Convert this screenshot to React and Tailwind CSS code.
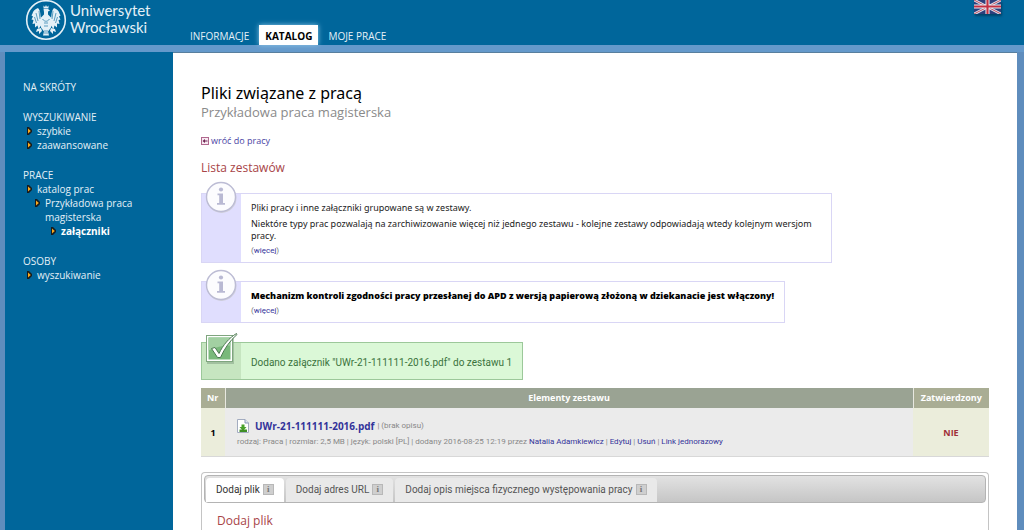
import React from 'react';

const navItems = [
  { label: 'INFORMACJE', active: false },
  { label: 'KATALOG', active: true },
  { label: 'MOJE PRACE', active: false },
];

const menuSections = [
  { title: 'NA SKRÓTY', items: [] },
  {
    title: 'WYSZUKIWANIE',
    items: [
      { label: 'szybkie', indent: 'pl-1' },
      { label: 'zaawansowane', indent: 'pl-1' },
    ],
  },
  {
    title: 'PRACE',
    items: [
      { label: 'katalog prac', indent: 'pl-1' },
      { label: 'Przykładowa praca magisterska', indent: 'pl-3' },
      { label: 'załączniki', indent: 'pl-7', active: true },
    ],
  },
  { title: 'OSOBY', items: [{ label: 'wyszukiwanie', indent: 'pl-1' }] },
];

const tabs = [
  { label: 'Dodaj plik', active: true },
  { label: 'Dodaj adres URL', active: false },
  { label: 'Dodaj opis miejsca fizycznego występowania pracy', active: false },
];

const Emblem = () => (
  <svg viewBox="0 0 42 42" className="w-[42px] h-[42px] shrink-0" fill="none" aria-hidden="true">
    <circle cx="21" cy="21" r="19.3" stroke="#e4f0f7" strokeWidth="1.6" />
    <g fill="#e4f0f7">
      <path d="M18.5 6.5 20 8l1-2 1 2 1.500-1.500v3h-5z" />
      <path d="M18.500 10h4.500l2 1.500-2 1v3l3 3v10l-3 4 1 4h-6l1-4-3-4v-10l3-3v-2.500z" />
      <path d="M16 19c-1-3 0-7-3-10-3 1-5 3-5.500 5.500l-1 2 1.500 1-1.500 3 2 .5-1 4 2.500-.5v4l2.500-2 1 3.500 3-4z" />
      <path d="M26 19c1-3 0-7 3-10 3 1 5 3 5.500 5.500l1 2-1.500 1 1.500 3-2 .5 1 4-2.500-.5v4l-2.500-2-1 3.500-3-4z" />
      <path d="M16 29l-4 1-1 3 3-1 0 3 3-3zM26 29l4 1 1 3-3-1 0 3-3-3z" />
    </g>
    <path d="M14 12l1 8M11 14l2 8M28 12l-1 8M31 14l-2 8M9.500 18l2 6M32.500 18l-2 6" stroke="#00669b" strokeWidth=".6" />
    <path d="M17.500 20c2 3 5 3 7 0M19 24h4M19 27h4M20 31v4M22 31v4" stroke="#00669b" strokeWidth=".6" />
  </svg>
);

const Flag = () => (
  <svg viewBox="0 0 28 14" className="block w-[27px] h-[14px] shadow-[1px_2px_2px_#00446b]" preserveAspectRatio="none" aria-hidden="true">
    <rect width="28" height="14" fill="#2c3f7c" />
    <path d="M0 0l28 14M28 0L0 14" stroke="#dfe3ee" strokeWidth="2.800" />
    <path d="M0 0l28 14M28 0L0 14" stroke="#c04a5c" strokeWidth="1" />
    <path d="M14 0v14M0 6.500h28" stroke="#eceef4" strokeWidth="4.200" />
    <path d="M14 0v14M0 6.500h28" stroke="#c22f42" strokeWidth="2.200" />
  </svg>
);

const Arrow = () => (
  <svg viewBox="0 0 5 8" className="w-[5px] h-2 mt-[3px] shrink-0" aria-hidden="true">
    <path d="M0 0h2l3 3v2L2 8H0z" fill="#161c20" />
    <path d="M1 1.500 3.800 4 1 6.500z" fill="#fba81c" />
  </svg>
);

const BackIcon = () => (
  <svg viewBox="0 0 8 8" className="w-2 h-2" aria-hidden="true">
    <rect x=".5" y=".5" width="7" height="7" fill="#f8eaf2" stroke="#b0688e" />
    <path d="M1.500 4 4 2v1.500h2.500v1H4V6z" fill="#6b2350" />
  </svg>
);

const InfoBadge = () => (
  <svg viewBox="0 0 34 34" className="absolute left-[2px] -top-[14px] w-[34px] h-[34px]" aria-hidden="true">
    <circle cx="17.500" cy="18" r="15" fill="#d0d0dc" />
    <circle cx="17" cy="17" r="14.500" fill="#fcfcfe" stroke="#bcbcd4" strokeWidth="1.400" />
    <circle cx="17" cy="9.500" r="2.100" fill="#b9b9d3" />
    <path d="M13.500 13.500h5.500v9.500h2v1.800h-8V23h2.200v-7.800h-1.700z" fill="#b9b9d3" />
  </svg>
);

const CheckBadge = () => (
  <svg viewBox="0 0 34 34" className="absolute left-[3px] -top-[11px] w-[34px] h-[34px]" aria-hidden="true">
    <rect x="2" y="5" width="27" height="27" fill="#8aa88a" opacity=".6" />
    <rect x="1.500" y="3.500" width="26" height="26" fill="#fff" stroke="#7fa57f" />
    <rect x="3.500" y="5.500" width="22" height="22" fill="#79b97b" />
    <path d="M3.500 5.500h22v8q-12 0-22 5z" fill="#a2d0a2" />
    <path d="M6.500 16.500l3.500-1 4 6C18 13 24 6 31.500 1.500l.5 1C25 8.500 19.500 16.500 15.500 25.500h-3z" fill="#fff" stroke="#4d7a52" strokeWidth="1" />
  </svg>
);

const FileIcon = () => (
  <svg viewBox="0 0 12 14" className="w-3 h-[14px] shrink-0" aria-hidden="true">
    <path d="M.5.5h7.500l3.500 3.500v9.500H.5z" fill="#fff" stroke="#a3acc0" />
    <path d="M8 .5V4h3.500" fill="#dfe5f0" stroke="#8795b5" />
    <path d="M4.500 5.500h3v2.500h2L6 12 2.500 8h2z" fill="#4aa12c" />
    <path d="M2.500 10.500h7.500v2.500H2.500z" fill="#3f8f26" />
  </svg>
);

const InfoMark = () => (
  <span className="inline-flex items-center justify-center w-[11px] h-[11px] bg-[#cfcfcf] border border-[#b8b8b8] font-['Liberation_Serif',serif] font-bold text-[9px] leading-[9px] text-[#777]">
    i
  </span>
);

const MoreLink = () => (
  <p className="mt-px font-[Roboto,sans-serif] text-[8px] leading-4 text-[#777]">
    (<a href="#" className="text-[#33339a]">więcej</a>)
  </p>
);

const InfoBox = ({ children, className }) => (
  <div className={`relative flex w-fit max-w-full bg-white border border-[#d9d6f5] ${className}`}>
    <div className="w-[39px] shrink-0 bg-[#e0defe]" />
    <InfoBadge />
    <div className="px-[10px] pt-2 pb-[3px] font-['Noto_Sans',sans-serif] text-[9px] leading-3 text-[#222]">{children}</div>
  </div>
);

const Header = () => (
  <header className="h-[52px] bg-[#00669b] border-b-[7px] border-[#6499cb] flex items-end">
    <a href="#" className="self-start flex items-start ml-[25px] -mt-px w-[158px] text-[#e4f0f7]">
      <Emblem />
      <span className="ml-[3px] mt-[3px] font-[Lato,sans-serif] text-[15px] leading-[17px]">
        Uniwersytet<br />Wrocławski
      </span>
    </a>
    <nav className="flex items-end">
      {navItems.map((item) => (
        <a
          key={item.label}
          href="#"
          className={
            item.active
              ? 'h-5 px-[6px] mx-[3px] bg-white text-black font-bold text-[10px] leading-[22px] shadow-[0_0_5px_#8cc8e8]'
              : 'h-5 px-[7px] text-[#e4f0f7] text-[10px] leading-[22px]'
          }
        >
          {item.label}
        </a>
      ))}
    </nav>
    <a href="#" aria-label="English" className="ml-auto mr-[23px] self-start">
      <Flag />
    </a>
  </header>
);

const Sidebar = () => (
  <aside className="w-[168px] shrink-0 bg-[#00669b] pl-[18px] pr-7 pt-7 text-[10px] leading-[14px] text-[#e4f0f7]">
    {menuSections.map((section) => (
      <div key={section.title} className="mb-4">
        <h2>{section.title}</h2>
        <ul>
          {section.items.map((item) => (
            <li key={item.label} className={item.indent}>
              <a href="#" className={item.active ? 'flex gap-[5px] font-bold text-white' : 'flex gap-[5px]'}>
                <Arrow />
                <span>{item.label}</span>
              </a>
            </li>
          ))}
        </ul>
      </div>
    ))}
  </aside>
);

const FilesTable = () => (
  <table className="w-full mt-2 border-collapse text-[9px]">
    <thead>
      <tr className="h-5 text-white">
        <th className="w-6 bg-[#a9ad94] border-r border-[#e8e8e0]">Nr</th>
        <th className="bg-[#9aa393] border-r border-[#e8e8e0]">Elementy zestawu</th>
        <th className="w-[76px] bg-[#a9ad94]">Zatwierdzony</th>
      </tr>
    </thead>
    <tbody>
      <tr className="h-12 border-b border-[#d8d8d8]">
        <td className="bg-[#ebeddb] pt-[2px] text-center font-bold text-black">1</td>
        <td className="bg-[#ebebeb] pl-3 pt-[3px] font-[Roboto,sans-serif] text-[8px] text-[#888]">
          <div className="flex items-center leading-[14px]">
            <FileIcon />
            <a href="#" className="ml-[6px] mr-[3px] font-['Open_Sans',sans-serif] text-[10px] font-bold text-[#33339a]">UWr-21-111111-2016.pdf</a>
            <span>| (brak opisu)</span>
          </div>
          <p className="mt-[3px] leading-3">
            rodzaj: Praca | rozmiar: 2,5 MB | język: polski [PL] | dodany 2016-08-25 12:19 przez{' '}
            <a href="#" className="text-[#33339a]">Natalia Adamkiewicz</a> | <a href="#" className="text-[#33339a]">Edytuj</a> |{' '}
            <a href="#" className="text-[#33339a]">Usuń</a> | <a href="#" className="text-[#33339a]">Link jednorazowy</a>
          </p>
        </td>
        <td className="bg-[#ebeddb] pt-[2px] text-center font-bold text-[#a03038]">NIE</td>
      </tr>
    </tbody>
  </table>
);

const TabPanel = () => (
  <section className="mt-[15px] border border-b-0 border-[#c4c4c4] rounded-t p-[2px]">
    <div role="tablist" className="flex items-end gap-[2px] h-7 px-px font-[Roboto,sans-serif] border border-[#b4b4b4] rounded bg-linear-to-b from-[#e2e2e2] to-[#c6c6c6]">
      {tabs.map((tab) => (
        <button
          key={tab.label}
          type="button"
          role="tab"
          aria-selected={tab.active}
          className={
            tab.active
              ? 'flex items-center gap-[3px] h-6 px-[10px] rounded-t bg-white text-[10px] text-[#333]'
              : 'flex items-center gap-[3px] h-6 px-[10px] rounded-t bg-[#e9e9e9] text-[10px] text-[#555]'
          }
        >
          {tab.label}
          <InfoMark />
        </button>
      ))}
    </div>
    <h3 className="px-[13px] pt-2 text-[12px] leading-5 text-[#a84448]">Dodaj plik</h3>
  </section>
);

const App = () => (
  <div className="h-screen overflow-hidden flex flex-col bg-[#5f8dbd] font-['Open_Sans','Noto_Sans',sans-serif]">
    <Header />
    <div className="flex-1 min-h-0 flex pl-[5px] pr-[7px]">
      <Sidebar />
      <main className="flex-1 min-w-0 bg-white px-7 pt-[30px] border-t border-[#587f9e]">
        <h1 className="font-['Noto_Sans',sans-serif] text-[16px] leading-5 text-black">Pliki związane z pracą</h1>
        <p className="text-[13px] leading-[18px] text-[#8a8a8a]">Przykładowa praca magisterska</p>
        <a href="#" className="mt-3 flex w-fit items-center gap-[2px] text-[9px] leading-4 text-[#4a44a4]">
          <BackIcon /> wróć do pracy
        </a>
        <h2 className="mt-[9px] text-[12px] leading-5 text-[#a84448]">Lista zestawów</h2>
        <InfoBox className="mt-[15px]">
          <div className="max-w-[570px]">
            <p>Pliki pracy i inne załączniki grupowane są w zestawy.</p>
            <p className="mt-1">
              Niektóre typy prac pozwalają na zarchiwizowanie więcej niż jednego zestawu - kolejne zestawy odpowiadają wtedy kolejnym wersjom pracy.
            </p>
            <MoreLink />
          </div>
        </InfoBox>
        <InfoBox className="mt-[18px]">
          <p className="font-['Open_Sans',sans-serif] font-extrabold text-black">
            Mechanizm kontroli zgodności pracy przesłanej do APD z wersją papierową złożoną w dziekanacie jest włączony!
          </p>
          <MoreLink />
        </InfoBox>
        <div className="relative mt-[19px] flex w-fit bg-[#dbf8d7] border border-[#9cc89a]">
          <div className="w-[39px] shrink-0 bg-[#c6e5c0]" />
          <CheckBadge />
          <p className="px-[10px] pt-3 pb-2 font-[Roboto,sans-serif] text-[10px] leading-4 text-[#3a733c]">
            Dodano załącznik "UWr-21-111111-2016.pdf" do zestawu 1
          </p>
        </div>
        <FilesTable />
        <TabPanel />
      </main>
    </div>
  </div>
);

export default App;
